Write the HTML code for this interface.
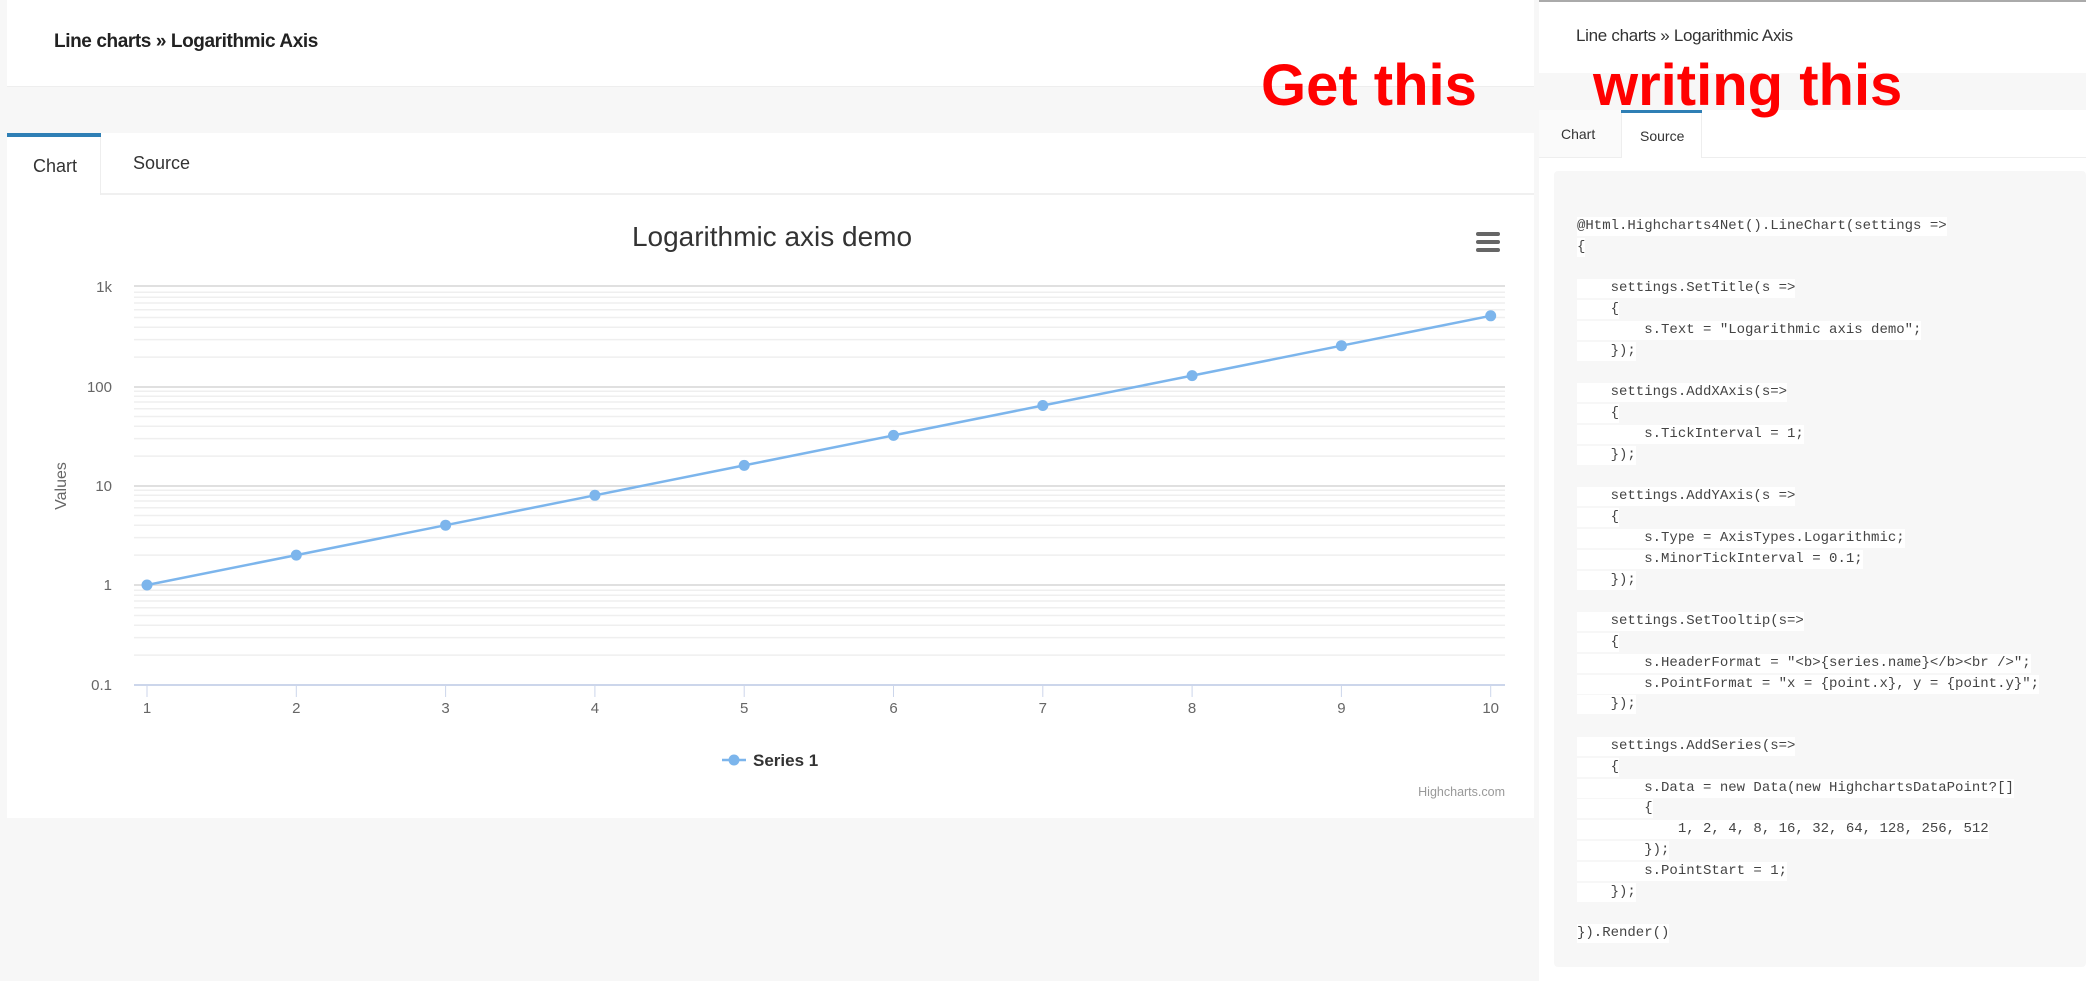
<!DOCTYPE html>
<html><head><meta charset="utf-8"><style>
*{margin:0;padding:0;box-sizing:border-box}
body{width:2086px;height:981px;background:#f7f7f7;position:relative;overflow:hidden;font-family:"Liberation Sans",sans-serif;color:#333}
.abs{position:absolute}
.code{position:absolute;left:1577px;top:216px;font-family:"Liberation Mono",monospace;font-size:14px;line-height:20.8px;color:#444;white-space:pre}
.code span{background:#fff;display:inline-block;height:19px;line-height:19px;vertical-align:top;margin-top:1px}
</style></head><body>
<div class="abs" style="left:7px;top:0;width:1527px;height:87px;background:#fff;border-bottom:1px solid #eee"></div>
<div class="abs" style="left:54px;top:31px;font-size:19px;font-weight:bold;color:#222;letter-spacing:-0.4px">Line charts » Logarithmic Axis</div>
<div class="abs" style="left:7px;top:133px;width:1527px;height:685px;background:#fff"></div>
<div class="abs" style="left:7px;top:193px;width:1527px;height:2px;background:#f0f0f0"></div>
<div class="abs" style="left:7px;top:133px;width:94px;height:62px;background:#fff;border-right:1px solid #eee"></div>
<div class="abs" style="left:7px;top:133px;width:94px;height:4px;background:#2f7fb5"></div>
<div class="abs" style="left:33px;top:156px;font-size:18px;color:#333">Chart</div>
<div class="abs" style="left:133px;top:153px;font-size:18px;color:#333">Source</div>
<svg class="abs" style="left:0;top:0" width="1540" height="820">
<g stroke="#efefef" stroke-width="1.5">
<line x1="134" x2="1505" y1="357.1" y2="357.1"/><line x1="134" x2="1505" y1="339.6" y2="339.6"/><line x1="134" x2="1505" y1="327.2" y2="327.2"/><line x1="134" x2="1505" y1="317.5" y2="317.5"/><line x1="134" x2="1505" y1="309.7" y2="309.7"/><line x1="134" x2="1505" y1="303.0" y2="303.0"/><line x1="134" x2="1505" y1="297.2" y2="297.2"/><line x1="134" x2="1505" y1="292.2" y2="292.2"/>
<line x1="134" x2="1505" y1="456.1" y2="456.1"/><line x1="134" x2="1505" y1="438.6" y2="438.6"/><line x1="134" x2="1505" y1="426.2" y2="426.2"/><line x1="134" x2="1505" y1="416.5" y2="416.5"/><line x1="134" x2="1505" y1="408.7" y2="408.7"/><line x1="134" x2="1505" y1="402.0" y2="402.0"/><line x1="134" x2="1505" y1="396.2" y2="396.2"/><line x1="134" x2="1505" y1="391.2" y2="391.2"/>
<line x1="134" x2="1505" y1="555.1" y2="555.1"/><line x1="134" x2="1505" y1="537.6" y2="537.6"/><line x1="134" x2="1505" y1="525.2" y2="525.2"/><line x1="134" x2="1505" y1="515.5" y2="515.5"/><line x1="134" x2="1505" y1="507.7" y2="507.7"/><line x1="134" x2="1505" y1="501.0" y2="501.0"/><line x1="134" x2="1505" y1="495.2" y2="495.2"/><line x1="134" x2="1505" y1="490.2" y2="490.2"/>
<line x1="134" x2="1505" y1="655.1" y2="655.1"/><line x1="134" x2="1505" y1="637.6" y2="637.6"/><line x1="134" x2="1505" y1="625.2" y2="625.2"/><line x1="134" x2="1505" y1="615.5" y2="615.5"/><line x1="134" x2="1505" y1="607.7" y2="607.7"/><line x1="134" x2="1505" y1="601.0" y2="601.0"/><line x1="134" x2="1505" y1="595.2" y2="595.2"/><line x1="134" x2="1505" y1="590.2" y2="590.2"/>
<line x1="134" x2="1505" y1="286" y2="286" stroke="#e0e0e0" stroke-width="2"/>
<line x1="134" x2="1505" y1="387" y2="387" stroke="#e0e0e0" stroke-width="2"/>
<line x1="134" x2="1505" y1="486" y2="486" stroke="#e0e0e0" stroke-width="2"/>
<line x1="134" x2="1505" y1="585" y2="585" stroke="#e0e0e0" stroke-width="2"/>
</g>
<line x1="134" x2="1505" y1="685" y2="685" stroke="#ccd6eb" stroke-width="2"/>
<g stroke="#ccd6eb" stroke-width="1">
<line x1="147" x2="147" y1="685" y2="697"/><line x1="296.3" x2="296.3" y1="685" y2="697"/><line x1="445.6" x2="445.6" y1="685" y2="697"/><line x1="594.9" x2="594.9" y1="685" y2="697"/><line x1="744.2" x2="744.2" y1="685" y2="697"/><line x1="893.5" x2="893.5" y1="685" y2="697"/><line x1="1042.8" x2="1042.8" y1="685" y2="697"/><line x1="1192.1" x2="1192.1" y1="685" y2="697"/><line x1="1341.4" x2="1341.4" y1="685" y2="697"/><line x1="1490.7" x2="1490.7" y1="685" y2="697"/>
</g>
<g font-family="Liberation Sans" font-size="15" fill="#666" text-anchor="middle">
<text x="147" y="713">1</text><text x="296.3" y="713">2</text><text x="445.6" y="713">3</text><text x="594.9" y="713">4</text><text x="744.2" y="713">5</text><text x="893.5" y="713">6</text><text x="1042.8" y="713">7</text><text x="1192.1" y="713">8</text><text x="1341.4" y="713">9</text><text x="1490.7" y="713">10</text>
</g>
<g font-family="Liberation Sans" font-size="15" fill="#666" text-anchor="end">
<text x="112" y="292">1k</text><text x="112" y="392">100</text><text x="112" y="491">10</text><text x="112" y="590">1</text><text x="112" y="690">0.1</text>
</g>
<text transform="translate(66,486) rotate(-90)" font-family="Liberation Sans" font-size="16" fill="#666" text-anchor="middle">Values</text>
<text x="772" y="246" font-family="Liberation Sans" font-size="28" fill="#333" text-anchor="middle">Logarithmic axis demo</text>
<g fill="#666"><rect x="1476" y="232" width="24" height="4" rx="2"/><rect x="1476" y="240" width="24" height="4" rx="2"/><rect x="1476" y="248" width="24" height="4" rx="2"/></g>
<polyline fill="none" stroke="#7cb5ec" stroke-width="2.5" points="147,585 296.3,555.1 445.6,525.2 594.9,495.3 744.2,465.4 893.5,435.4 1042.8,405.5 1192.1,375.6 1341.4,345.7 1490.7,315.8"/>
<g fill="#7cb5ec"><circle cx="147" cy="585" r="5.5"/><circle cx="296.3" cy="555.1" r="5.5"/><circle cx="445.6" cy="525.2" r="5.5"/><circle cx="594.9" cy="495.3" r="5.5"/><circle cx="744.2" cy="465.4" r="5.5"/><circle cx="893.5" cy="435.4" r="5.5"/><circle cx="1042.8" cy="405.5" r="5.5"/><circle cx="1192.1" cy="375.6" r="5.5"/><circle cx="1341.4" cy="345.7" r="5.5"/><circle cx="1490.7" cy="315.8" r="5.5"/></g>
<line x1="722" x2="746" y1="760" y2="760" stroke="#7cb5ec" stroke-width="2.5"/><circle cx="734" cy="760" r="5.5" fill="#7cb5ec"/>
<text x="753" y="766" font-family="Liberation Sans" font-size="17" font-weight="bold" fill="#333">Series 1</text>
<text x="1505" y="796" font-family="Liberation Sans" font-size="12.5" fill="#999" text-anchor="end">Highcharts.com</text>
</svg>
<div class="abs" style="left:1261px;top:52px;font-size:58px;font-weight:bold;color:#f00">Get this</div>
<div class="abs" style="left:1539px;top:0;width:547px;height:981px;background:#fff"></div>
<div class="abs" style="left:1539px;top:0;width:547px;height:2px;background:#aaa"></div>
<div class="abs" style="left:1539px;top:73px;width:547px;height:37px;background:#f7f7f7"></div>
<div class="abs" style="left:1576px;top:26px;font-size:17px;color:#333;letter-spacing:-0.3px">Line charts » Logarithmic Axis</div>
<div class="abs" style="left:1539px;top:110px;width:82px;height:48px;background:#fafafa;border-bottom:1px solid #eee"></div>
<div class="abs" style="left:1702px;top:157px;width:384px;height:1px;background:#eee"></div>
<div class="abs" style="left:1621px;top:110px;width:81px;height:48px;border-left:1px solid #eee;border-right:1px solid #eee"></div>
<div class="abs" style="left:1621px;top:110px;width:81px;height:3px;background:#2f7fb5"></div>
<div class="abs" style="left:1561px;top:126px;font-size:14px;color:#333">Chart</div>
<div class="abs" style="left:1640px;top:128px;font-size:14px;color:#333">Source</div>
<div class="abs" style="left:1554px;top:171px;width:532px;height:796px;background:#f7f7f7;border-radius:4px"></div>
<div class="code"><span>@Html.Highcharts4Net().LineChart(settings =&gt;</span>
<span>{</span>

<span>    settings.SetTitle(s =&gt;</span>
<span>    {</span>
<span>        s.Text = "Logarithmic axis demo";</span>
<span>    });</span>

<span>    settings.AddXAxis(s=&gt;</span>
<span>    {</span>
<span>        s.TickInterval = 1;</span>
<span>    });</span>

<span>    settings.AddYAxis(s =&gt;</span>
<span>    {</span>
<span>        s.Type = AxisTypes.Logarithmic;</span>
<span>        s.MinorTickInterval = 0.1;</span>
<span>    });</span>

<span>    settings.SetTooltip(s=&gt;</span>
<span>    {</span>
<span>        s.HeaderFormat = "&lt;b&gt;{series.name}&lt;/b&gt;&lt;br /&gt;";</span>
<span>        s.PointFormat = "x = {point.x}, y = {point.y}";</span>
<span>    });</span>

<span>    settings.AddSeries(s=&gt;</span>
<span>    {</span>
<span>        s.Data = new Data(new HighchartsDataPoint?[]</span>
<span>        {</span>
<span>            1, 2, 4, 8, 16, 32, 64, 128, 256, 512</span>
<span>        });</span>
<span>        s.PointStart = 1;</span>
<span>    });</span>

<span>}).Render()</span></div>
<div class="abs" style="left:1593px;top:52px;font-size:58px;font-weight:bold;color:#f00">writing this</div>
</body></html>
